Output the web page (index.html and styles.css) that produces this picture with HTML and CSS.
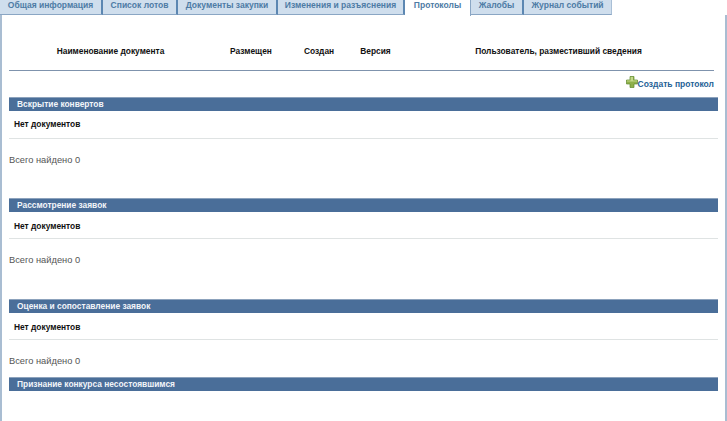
FILE: index.html
```html
<!DOCTYPE html>
<html lang="ru">
<head>
<meta charset="utf-8">
<title>Протоколы</title>
<link rel="stylesheet" href="styles.css">
</head>
<body>
<nav class="tabs">
  <a class="tab t1">Общая информация</a>
  <a class="tab t2">Список лотов</a>
  <a class="tab t3">Документы закупки</a>
  <a class="tab t4">Изменения и разъяснения</a>
  <a class="tab active">Протоколы</a>
  <a class="tab t6">Жалобы</a>
  <a class="tab t7">Журнал событий</a>
</nav>
<main class="panel">
  <div class="head">
    <div class="hc c1">Наименование документа</div>
    <div class="hc c2">Размещен</div>
    <div class="hc c3">Создан</div>
    <div class="hc c4">Версия</div>
    <div class="hc c5">Пользователь, разместивший сведения</div>
  </div>
  <div class="actions">
    <svg class="plus" width="12" height="12" viewBox="0 0 12 12"><path d="M4 0.5h4v3.5h3.5v4H8v3.5H4V8H0.5V4H4z" fill="#8fb04a" stroke="#5f8a2c" stroke-width="0.7"/><path d="M4.6 1h2.4v3.6H11v1H1v-1h3.6z" fill="#c3d98a"/></svg>
    <a class="create">Создать протокол</a>
  </div>
  <section class="sec s1">
    <h2 class="bar">Вскрытие конвертов</h2>
    <div class="empty">Нет документов</div>
    <div class="total">Всего найдено 0</div>
  </section>
  <section class="sec s2">
    <h2 class="bar">Рассмотрение заявок</h2>
    <div class="empty">Нет документов</div>
    <div class="total">Всего найдено 0</div>
  </section>
  <section class="sec s3">
    <h2 class="bar">Оценка и сопоставление заявок</h2>
    <div class="empty">Нет документов</div>
    <div class="total">Всего найдено 0</div>
  </section>
  <section class="sec s4">
    <h2 class="bar">Признание конкурса несостоявшимся</h2>
  </section>
</main>
</body>
</html>
```
FILE: styles.css
```css
html, body {
  margin: 0;
  height: 421px;
  overflow: hidden;
  background: #fff;
  font-family: "Liberation Sans", Arial, sans-serif;
}
.tabs {
  display: flex;
  height: 15px;
  font-size: 8.5px;
  font-weight: bold;
}
.tab {
  display: block;
  box-sizing: border-box;
  height: 15px;
  line-height: 11px;
  text-align: center;
  color: #4d7ba5;
  background: #cfdeed;
  border-right: 2px solid #5c87b2;
  border-bottom: 1px solid #8aa6c4;
}
.t1 { width: 103px; }
.t2 { width: 75px; }
.t3 { width: 100px; }
.t4 { width: 127px; }
.active {
  width: 66px;
  background: #fff;
  border-right: 1px solid #8aa6c4;
  border-bottom: 0;
  height: 16px;
  line-height: 10px;
  position: relative;
  z-index: 1;
}
.t6 { width: 53px; }
.t7 { width: 88px; border-right: 1px solid #a9bfd6; }
.panel {
  box-sizing: border-box;
  width: 727px;
  height: 406px;
  padding-left: 7px;
  border-left: 2px solid #a9bdd2;
  border-right: 2px solid #a9bdd2;
}
.head {
  display: flex;
  width: 705px;
  height: 56px;
  box-sizing: border-box;
  border-bottom: 1px solid #7f93ad;
  font-size: 8.4px;
  font-weight: bold;
  color: #111;
  align-items: center;
  padding-top: 18px;
  padding-bottom: 1px;
}
.hc { text-align: center; }
.c1 { width: 203px; }
.c2 { width: 78px; }
.c3 { width: 58px; }
.c4 { width: 55px; }
.c5 { width: 311px; }
.actions {
  display: flex;
  justify-content: flex-end;
  align-items: center;
  width: 705px;
  height: 26px;
}
.plus { margin-bottom: 4px; }
.create {
  font-size: 8.5px;
  font-weight: bold;
  color: #1f6296;
}
.sec { width: 709px; }
.bar {
  margin: 0;
  height: 14px;
  box-sizing: border-box;
  padding-left: 8px;
  background: #4a6e99;
  border-top: 1px solid #8ca2bc;
  color: #f2f5f9;
  font-size: 8.4px;
  font-weight: bold;
  line-height: 13px;
}
.empty {
  height: 28px;
  box-sizing: border-box;
  padding-left: 5px;
  border-bottom: 1px solid #dfe3e3;
  font-size: 8.4px;
  font-weight: bold;
  color: #111;
  line-height: 27px;
}
.total {
  font-size: 9.3px;
  color: #555;
  line-height: 12px;
  margin-top: 15px;
}
.s1 { height: 101px; }
.s2 { height: 101px; }
.s2 .empty { line-height: 29px; height: 27px; }
.s3 { height: 78px; }
.s3 .empty { line-height: 28px; height: 27px; }
```
